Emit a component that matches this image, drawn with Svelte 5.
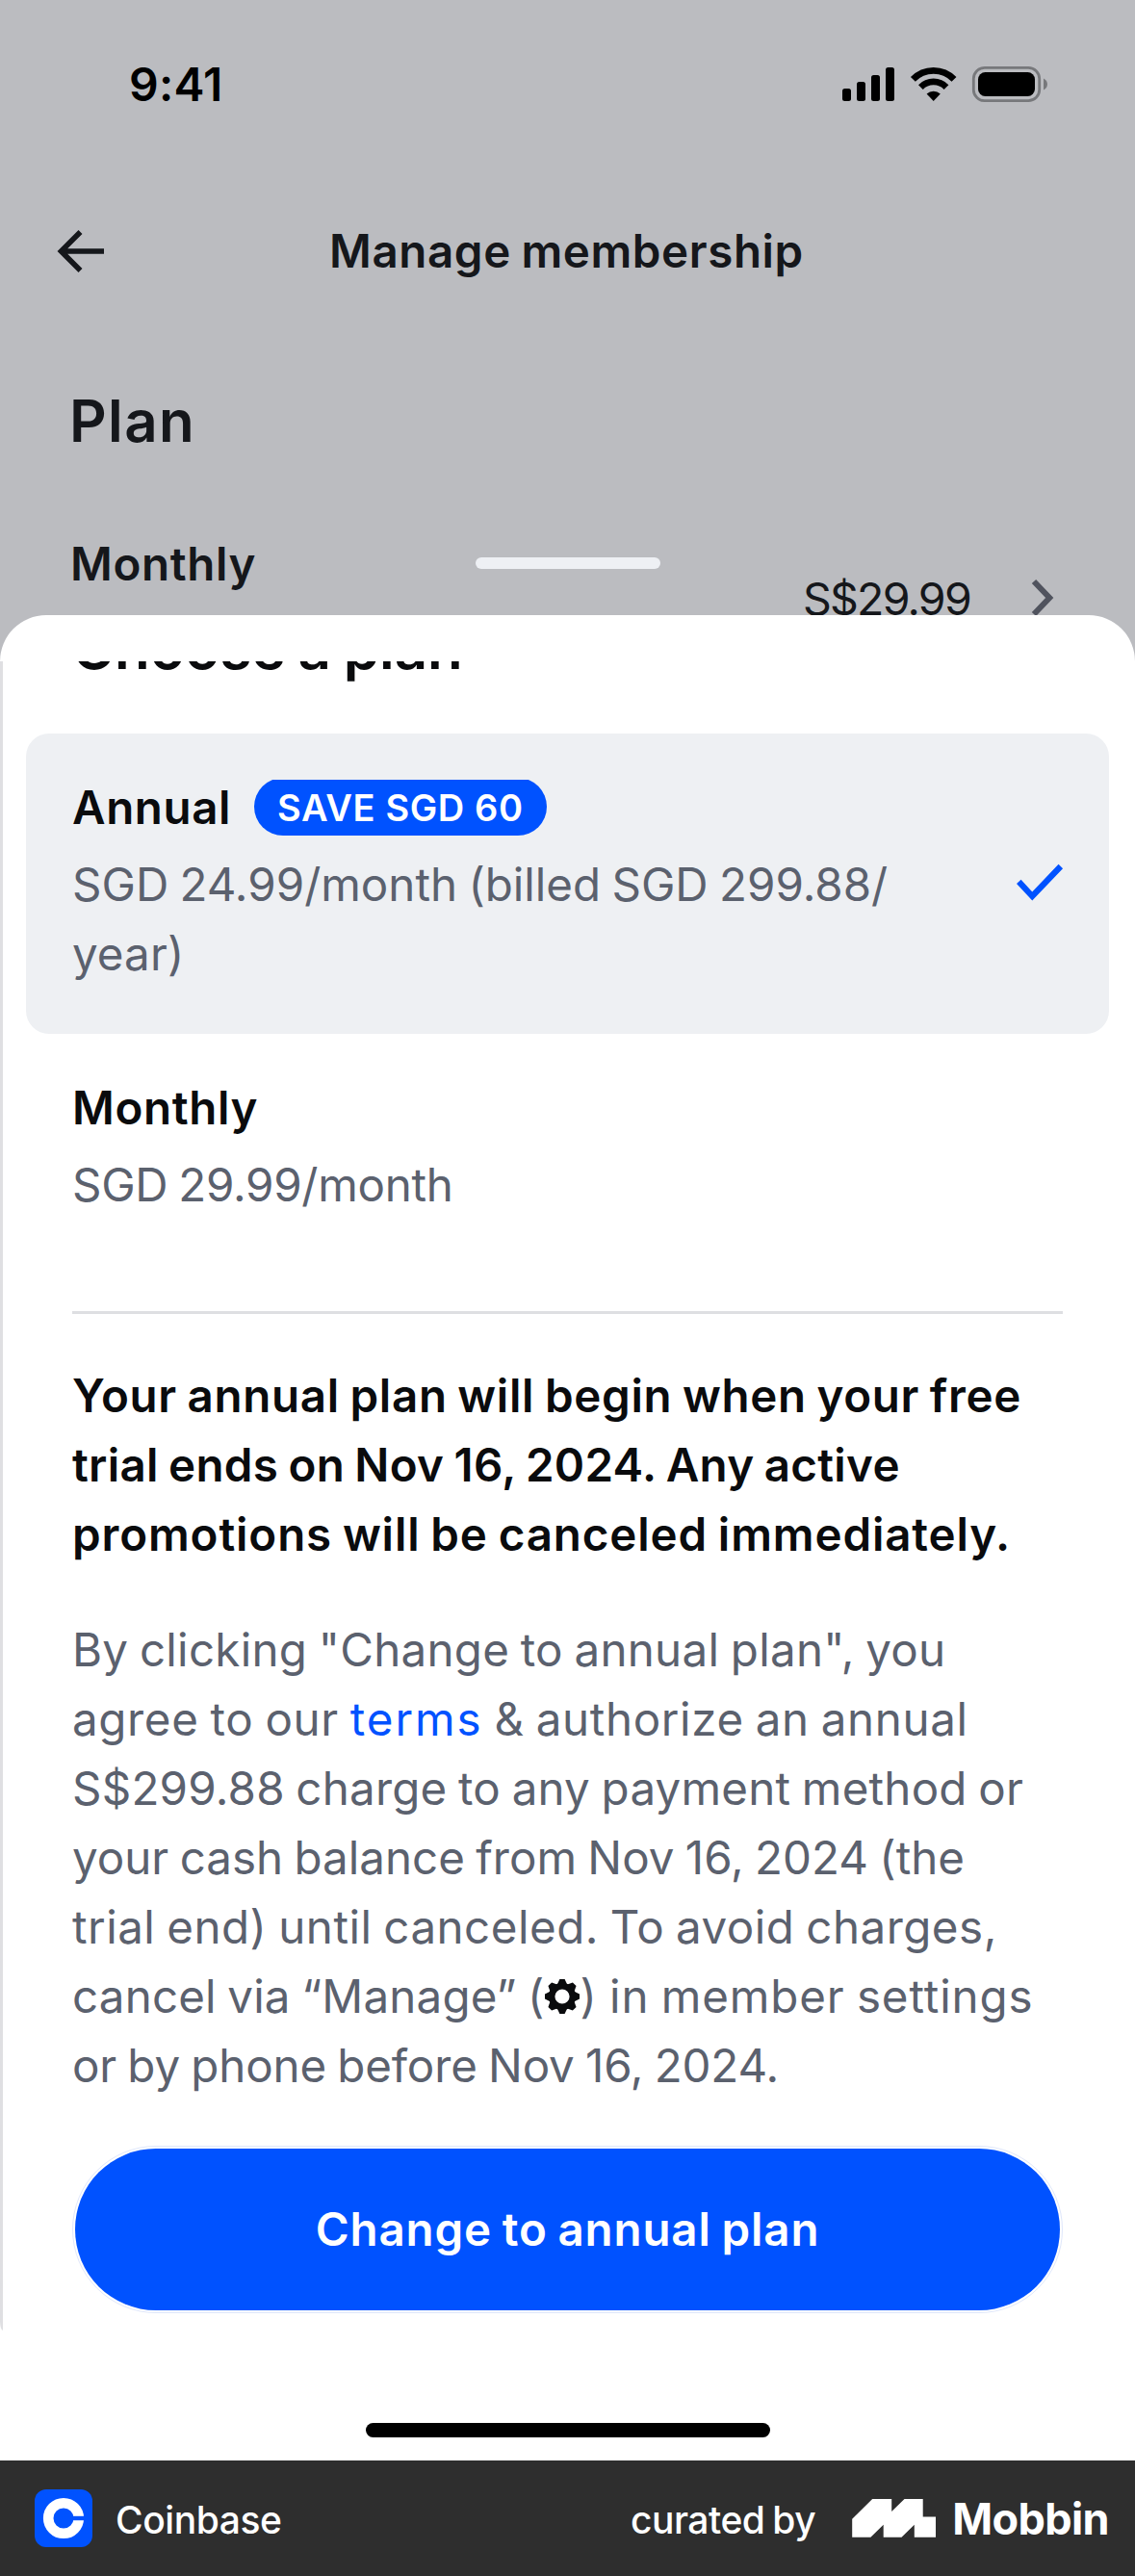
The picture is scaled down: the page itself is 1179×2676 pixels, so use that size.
<script>
  // Each line carries its own tracking, in px.
  const notice = [
    { text: 'Your annual plan will begin when your free', tracking: 0.69 },
    { text: 'trial ends on Nov 16, 2024. Any active', tracking: 0.31 },
    { text: 'promotions will be canceled immediately.', tracking: 0.87 }
  ];
  const legalStart = { text: 'By clicking "Change to annual plan", you', tracking: 0.27 };
  const legalMiddle = [
    { text: 'S$299.88 charge to any payment method or', tracking: 0.22 },
    { text: 'your cash balance from Nov 16, 2024 (the', tracking: 0.01 },
    { text: 'trial end) until canceled. To avoid charges,', tracking: 0.5 }
  ];
  const legalEnd = { text: 'or by phone before Nov 16, 2024.', tracking: -0.12 };
  const teeth = [0, 45, 90, 135, 180, 225, 270, 315];
</script>

{#snippet row(line)}
  <span class="line" style:letter-spacing="{line.tracking}px">{line.text}</span>
{/snippet}

<div class="page">
  <div class="backdrop">
    <div class="status">
      <span class="time">9:41</span>
      <svg class="status-icons" width="216" height="40" viewBox="874 68 216 40">
        <rect x="875" y="92" width="9" height="13" rx="2.5" />
        <rect x="890" y="85" width="9" height="20" rx="2.5" />
        <rect x="905" y="78" width="9" height="27" rx="2.5" />
        <rect x="920" y="70" width="9" height="35" rx="2.5" />
        <path d="M948.4 82.4A29.6 29.6 0 0 1 991 82.4" fill="none" stroke="#000" stroke-width="6.8" />
        <path d="M956.4 90.6A18.4 18.4 0 0 1 983 90.6" fill="none" stroke="#000" stroke-width="6.6" />
        <path d="M962.6 97.6A10.4 10.4 0 0 1 976.8 97.6L969.7 105Z" />
        <rect x="1011.3" y="70.3" width="68.4" height="34.4" rx="11.5" fill="none" stroke="#77787b" stroke-width="2.8" />
        <rect x="1016" y="75" width="59" height="25" rx="7.5" />
        <path d="M1084 81.5C1089.3 84 1089.3 91 1084 93.5Z" fill="#77787b" />
      </svg>
    </div>
    <div class="navbar">
      <svg width="52" height="48" viewBox="58 237 52 48" fill="none" stroke="#15171b" stroke-width="5.6">
        <path d="M83.5 241L63.5 261L83.5 281M63.5 261H108" />
      </svg>
      <span class="nav-title">Manage membership</span>
    </div>
    <h1 class="section">Plan</h1>
    <div class="current">
      <span class="current-name">Monthly</span>
      <span class="current-price">S$29.99</span>
      <svg width="26" height="44" viewBox="1070 599 26 44" fill="none" stroke="#50535e" stroke-width="6">
        <path d="M1074 604L1090.2 621L1074 638" />
      </svg>
    </div>
    <div class="handle"></div>
  </div>

  <div class="sheet">
    <div class="scroller">
      <div class="edge"></div>
      <div class="content">
        <h2>Choose a plan</h2>
        <div class="option selected">
          <div class="details">
            <div class="name-row">
              <strong class="annual">Annual</strong>
              <span class="clip"><span class="badge">SAVE SGD 60</span></span>
            </div>
            <div class="desc">
              <span class="line annual-price">SGD 24.99/month (billed SGD 299.88/</span>
              <span class="line">year)</span>
            </div>
          </div>
          <svg class="check" width="50" height="40" viewBox="1055 897 50 40" fill="none" stroke="#0052ff" stroke-width="6.2">
            <path d="M1058.3 915.8L1072.3 931L1101.8 900" />
          </svg>
        </div>
        <div class="option">
          <div class="details">
            <strong class="monthly">Monthly</strong>
            <div class="desc"><span class="line monthly-price">SGD 29.99/month</span></div>
          </div>
        </div>
        <div class="divider"></div>
        <p class="notice">{#each notice as line}{@render row(line)}{/each}</p>
        <p class="legal">
          {@render row(legalStart)}
          <span class="line agree">agree to our <a href="#terms">terms</a> &amp; authorize an annual</span>
          {#each legalMiddle as line}{@render row(line)}{/each}
          <span class="line via"><span class="via-lead">cancel via “Manage” (</span><svg class="gear" width="38" height="38" viewBox="-19 -19 38 38">
              <circle r="10.8" fill="none" stroke="#0a0b0d" stroke-width="6.4" />
              {#each teeth as angle}
                <path d="M-5.4 -12L-2.6 -18H2.6L5.4 -12Z" fill="#0a0b0d" transform="rotate({angle})" />
              {/each}
            </svg><span class="via-tail">) in member settings</span></span>
          {@render row(legalEnd)}
        </p>
        <button class="cta"><span>Change to annual plan</span></button>
      </div>
    </div>
    <div class="home"></div>
  </div>

  <footer>
    <svg width="60" height="60" viewBox="0 0 60 60">
      <rect width="60" height="60" rx="12" fill="#0052ff" />
      <circle cx="30" cy="30" r="15.8" fill="none" stroke="#fff" stroke-width="10.6" />
      <rect x="39.8" y="27.8" width="12" height="4.4" fill="#0052ff" />
    </svg>
    <span class="app-name">Coinbase</span>
    <span class="curated">curated by</span>
    <svg class="mark" width="87" height="40" viewBox="886 2596 87 40" fill="#fff">
      <path d="M886.2 2616.7L907.2 2596H927.2V2609L940.5 2596H959.7V2614.4H973V2635.7H950.8V2622.7L937.5 2635.7H918.7V2622.7L905.4 2635.7H886.2Z" />
    </svg>
    <span class="mobbin">Mobbin</span>
  </footer>
</div>

<style>
  :global(body) { margin: 0; background: #bbbcc0; }
  .page {
    width: 1179px;
    height: 2676px;
    overflow: hidden;
    background: #bbbcc0;
    font: 400 47.5px/72px Inter, 'Liberation Sans', sans-serif;
    word-spacing: -2px;
    color: #0a0b0d;
    white-space: nowrap;
  }
  h1, h2, p { margin: 0; }
  strong { font-weight: 600; }
  svg { display: block; flex: none; }

  .backdrop {
    position: relative;
    box-sizing: border-box;
    height: 639px;
    padding: 51px 75px 0;
    overflow: hidden;
    color: #15171b;
  }
  .status {
    display: flex;
    justify-content: space-between;
    height: 72px;
    padding: 0 14px 0 59px;
    color: #000;
  }
  .time { padding-top: 1px; font-size: 48px; font-weight: 600; letter-spacing: 0.2px; }
  .status-icons { margin-top: 17px; }
  .navbar {
    display: flex;
    align-items: center;
    height: 72px;
    margin: 102px 0 0 -17px;
  }
  .nav-title { margin-left: 232px; font-weight: 600; letter-spacing: 0.6px; }
  .section {
    margin: 104px 0 0 -3px;
    font-size: 60px;
    font-weight: 600;
    line-height: 72px;
    letter-spacing: 1.4px;
  }
  .current { display: flex; margin: 77px 8px 0 -2px; }
  .current-name { font-weight: 600; letter-spacing: 0.65px; }
  .current-price { margin: 36px 62px 0 auto; font-size: 46.5px; letter-spacing: -1.77px; }
  .current svg { margin-top: 49px; }
  .handle {
    position: absolute;
    left: 494px;
    top: 579px;
    width: 192px;
    height: 12px;
    border-radius: 6px;
    background: #eef0f4;
  }

  .sheet {
    box-sizing: border-box;
    height: 1917px;
    padding-top: 48px;
    border-radius: 48px 48px 0 0;
    background: #fff;
  }
  .scroller {
    display: grid;
    grid-template-columns: 3px 1fr;
    height: 1734px;
    overflow: hidden;
  }
  .edge { background: #dfdfe2; border-radius: 0 0 0 3px / 0 0 0 10px; }
  .content { display: flex; flex-direction: column; padding: 0 75px 0 72px; }
  h2 {
    margin: -50px 0 0;
    font-size: 60px;
    font-weight: 600;
    line-height: 72px;
    letter-spacing: -0.15px;
  }
  .option { display: flex; align-items: center; justify-content: space-between; }
  .selected {
    box-sizing: border-box;
    height: 312px;
    margin: 53px -48px 41px;
    padding: 0 47px 6px 48px;
    border-radius: 24px;
    background: #eef0f3;
  }
  .details { display: flex; flex-direction: column; gap: 8px; }
  .name-row { display: flex; align-items: center; height: 72px; }
  .annual { width: 189px; letter-spacing: 0.6px; }
  .monthly { letter-spacing: 0.65px; }
  .clip { height: 58px; overflow: hidden; display: flex; align-items: flex-end; }
  .badge {
    box-sizing: border-box;
    width: 304px;
    height: 60px;
    flex: none;
    border-radius: 30px;
    background: #0052ff;
    color: #fff;
    font-size: 38px;
    font-weight: 600;
    line-height: 62px;
    letter-spacing: 0.62px;
    word-spacing: 0;
    padding-left: 24px;
  }
  .desc { color: #5b616e; letter-spacing: 0.1px; }
  .line { display: block; height: 72px; }
  .annual-price { letter-spacing: 0; }
  .monthly-price { letter-spacing: -0.3px; }
  .check { margin-top: 3px; }
  .divider { height: 3px; margin-top: 95px; background: #dedfe2; }
  .notice { margin-top: 49px; font-weight: 600; }
  .legal { margin-top: 48px; color: #5b616e; }
  .agree { letter-spacing: 0.65px; }
  .agree a { color: #0052ff; text-decoration: none; letter-spacing: 1.9px; }
  .via { display: flex; align-items: center; }
  .via-lead { letter-spacing: 0.18px; }
  .via-tail { letter-spacing: 0.9px; }
  .gear { margin: 0 0 0 -1px; }
  .cta {
    box-sizing: border-box;
    width: 1029px;
    height: 174px;
    margin: 47px 0 0;
    padding: 2px;
    border: 1px solid #dfe7fb;
    border-radius: 87px;
    background: #fff;
    color: #fff;
    font: inherit;
    font-weight: 600;
    letter-spacing: 0.84px;
    word-spacing: -2px;
  }
  .cta span {
    display: block;
    height: 168px;
    border-radius: 84px;
    background: #0052ff;
    line-height: 168px;
  }
  .home {
    width: 420px;
    height: 15px;
    margin: 96px auto 0;
    border-radius: 8px;
    background: #000;
  }

  footer {
    box-sizing: border-box;
    display: flex;
    align-items: center;
    height: 120px;
    padding: 0 27px 0 36px;
    background: #2e2e2e;
    color: #fff;
    font-size: 39px;
    font-weight: 500;
  }
  .app-name { margin: 3px 0 0 24px; letter-spacing: -0.45px; }
  .curated { margin: 3px 38px 0 auto; letter-spacing: -0.5px; }
  .mobbin { margin: 2px 0 0 17px; font-size: 45px; font-weight: 700; letter-spacing: -0.6px; }
</style>
